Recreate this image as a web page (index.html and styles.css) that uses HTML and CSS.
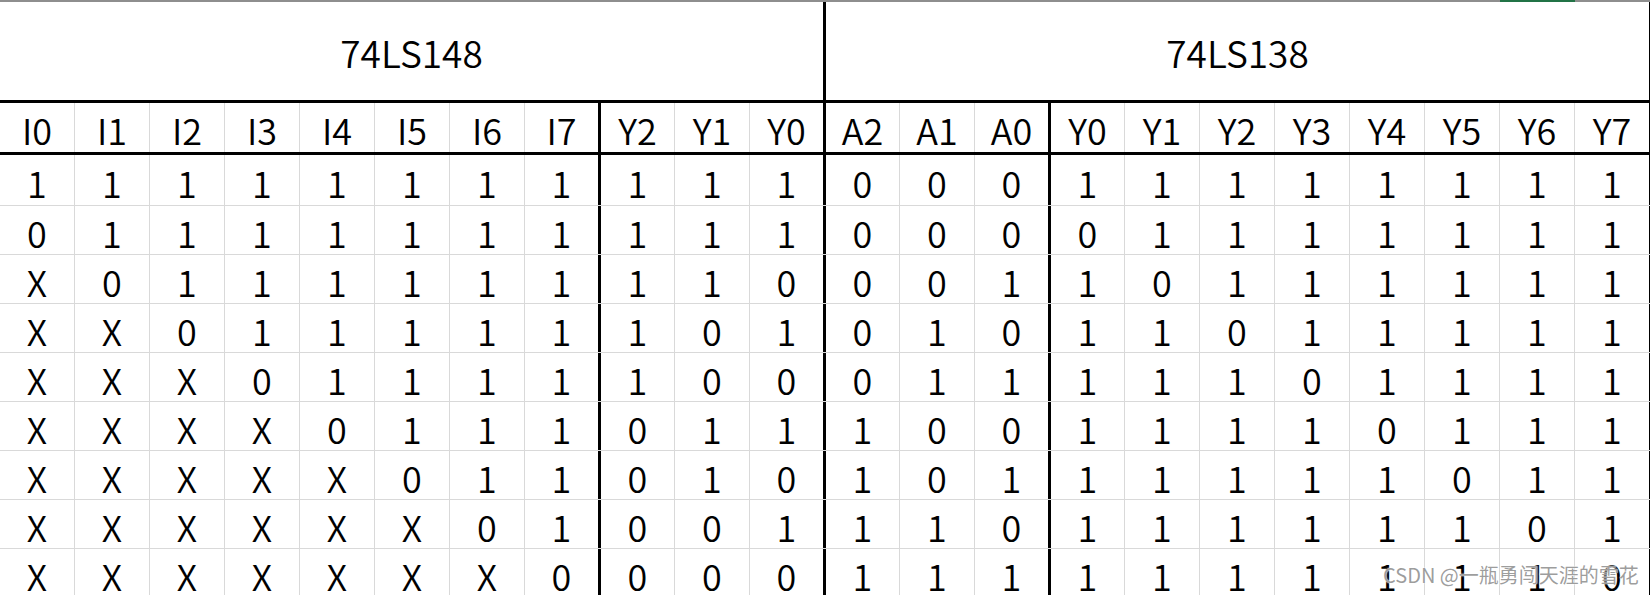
FILE: index.html
```html
<!DOCTYPE html>
<html lang="zh-CN">
<head>
<meta charset="utf-8">
<title>74LS148 / 74LS138</title>
<link rel="stylesheet" href="styles.css">
</head>
<body>
<div class="strip"><div class="strip-sel"></div></div>
<div class="sheet">
  <div class="row title">
    <div class="cell t1">74LS148</div>
    <div class="cell t2">74LS138</div>
  </div>
  <div class="row head">
    <div class="cell">I0</div><div class="cell">I1</div><div class="cell">I2</div><div class="cell">I3</div><div class="cell">I4</div><div class="cell">I5</div><div class="cell">I6</div><div class="cell">I7</div><div class="cell">Y2</div><div class="cell">Y1</div><div class="cell">Y0</div><div class="cell">A2</div><div class="cell">A1</div><div class="cell">A0</div><div class="cell">Y0</div><div class="cell">Y1</div><div class="cell">Y2</div><div class="cell">Y3</div><div class="cell">Y4</div><div class="cell">Y5</div><div class="cell">Y6</div><div class="cell">Y7</div>
  </div>
  <div class="row data first">
    <div class="cell">1</div><div class="cell">1</div><div class="cell">1</div><div class="cell">1</div><div class="cell">1</div><div class="cell">1</div><div class="cell">1</div><div class="cell">1</div><div class="cell">1</div><div class="cell">1</div><div class="cell">1</div><div class="cell">0</div><div class="cell">0</div><div class="cell">0</div><div class="cell">1</div><div class="cell">1</div><div class="cell">1</div><div class="cell">1</div><div class="cell">1</div><div class="cell">1</div><div class="cell">1</div><div class="cell">1</div>
  </div>
  <div class="row data">
    <div class="cell">0</div><div class="cell">1</div><div class="cell">1</div><div class="cell">1</div><div class="cell">1</div><div class="cell">1</div><div class="cell">1</div><div class="cell">1</div><div class="cell">1</div><div class="cell">1</div><div class="cell">1</div><div class="cell">0</div><div class="cell">0</div><div class="cell">0</div><div class="cell">0</div><div class="cell">1</div><div class="cell">1</div><div class="cell">1</div><div class="cell">1</div><div class="cell">1</div><div class="cell">1</div><div class="cell">1</div>
  </div>
  <div class="row data">
    <div class="cell">X</div><div class="cell">0</div><div class="cell">1</div><div class="cell">1</div><div class="cell">1</div><div class="cell">1</div><div class="cell">1</div><div class="cell">1</div><div class="cell">1</div><div class="cell">1</div><div class="cell">0</div><div class="cell">0</div><div class="cell">0</div><div class="cell">1</div><div class="cell">1</div><div class="cell">0</div><div class="cell">1</div><div class="cell">1</div><div class="cell">1</div><div class="cell">1</div><div class="cell">1</div><div class="cell">1</div>
  </div>
  <div class="row data">
    <div class="cell">X</div><div class="cell">X</div><div class="cell">0</div><div class="cell">1</div><div class="cell">1</div><div class="cell">1</div><div class="cell">1</div><div class="cell">1</div><div class="cell">1</div><div class="cell">0</div><div class="cell">1</div><div class="cell">0</div><div class="cell">1</div><div class="cell">0</div><div class="cell">1</div><div class="cell">1</div><div class="cell">0</div><div class="cell">1</div><div class="cell">1</div><div class="cell">1</div><div class="cell">1</div><div class="cell">1</div>
  </div>
  <div class="row data">
    <div class="cell">X</div><div class="cell">X</div><div class="cell">X</div><div class="cell">0</div><div class="cell">1</div><div class="cell">1</div><div class="cell">1</div><div class="cell">1</div><div class="cell">1</div><div class="cell">0</div><div class="cell">0</div><div class="cell">0</div><div class="cell">1</div><div class="cell">1</div><div class="cell">1</div><div class="cell">1</div><div class="cell">1</div><div class="cell">0</div><div class="cell">1</div><div class="cell">1</div><div class="cell">1</div><div class="cell">1</div>
  </div>
  <div class="row data">
    <div class="cell">X</div><div class="cell">X</div><div class="cell">X</div><div class="cell">X</div><div class="cell">0</div><div class="cell">1</div><div class="cell">1</div><div class="cell">1</div><div class="cell">0</div><div class="cell">1</div><div class="cell">1</div><div class="cell">1</div><div class="cell">0</div><div class="cell">0</div><div class="cell">1</div><div class="cell">1</div><div class="cell">1</div><div class="cell">1</div><div class="cell">0</div><div class="cell">1</div><div class="cell">1</div><div class="cell">1</div>
  </div>
  <div class="row data">
    <div class="cell">X</div><div class="cell">X</div><div class="cell">X</div><div class="cell">X</div><div class="cell">X</div><div class="cell">0</div><div class="cell">1</div><div class="cell">1</div><div class="cell">0</div><div class="cell">1</div><div class="cell">0</div><div class="cell">1</div><div class="cell">0</div><div class="cell">1</div><div class="cell">1</div><div class="cell">1</div><div class="cell">1</div><div class="cell">1</div><div class="cell">1</div><div class="cell">0</div><div class="cell">1</div><div class="cell">1</div>
  </div>
  <div class="row data">
    <div class="cell">X</div><div class="cell">X</div><div class="cell">X</div><div class="cell">X</div><div class="cell">X</div><div class="cell">X</div><div class="cell">0</div><div class="cell">1</div><div class="cell">0</div><div class="cell">0</div><div class="cell">1</div><div class="cell">1</div><div class="cell">1</div><div class="cell">0</div><div class="cell">1</div><div class="cell">1</div><div class="cell">1</div><div class="cell">1</div><div class="cell">1</div><div class="cell">1</div><div class="cell">0</div><div class="cell">1</div>
  </div>
  <div class="row data">
    <div class="cell">X</div><div class="cell">X</div><div class="cell">X</div><div class="cell">X</div><div class="cell">X</div><div class="cell">X</div><div class="cell">X</div><div class="cell">0</div><div class="cell">0</div><div class="cell">0</div><div class="cell">0</div><div class="cell">1</div><div class="cell">1</div><div class="cell">1</div><div class="cell">1</div><div class="cell">1</div><div class="cell">1</div><div class="cell">1</div><div class="cell">1</div><div class="cell">1</div><div class="cell">1</div><div class="cell">0</div>
  </div>
</div>
<div class="watermark">CSDN @一瓶勇闯天涯的雪花</div>
</body>
</html>
```

FILE: styles.css
```css
html, body {
  margin: 0;
  padding: 0;
  background: #ffffff;
  width: 1650px;
  height: 595px;
  overflow: hidden;
}

body {
  position: relative;
  font-family: "Noto Sans CJK SC", "Noto Sans", sans-serif;
  font-weight: 350;
  color: #000000;
}

.strip {
  height: 2px;
  width: 1650px;
  background: #8e8e8e;
  display: flex;
  padding-left: 1500px;
  box-sizing: border-box;
}

.strip-sel {
  width: 75px;
  height: 2px;
  background: #217346;
}

.sheet {
  display: flex;
  flex-direction: column;
  width: 1650px;
}

.row {
  display: flex;
  box-sizing: border-box;
}

.cell {
  box-sizing: border-box;
  width: 75px;
  flex: none;
  display: flex;
  align-items: center;
  justify-content: center;
  font-size: 36px;
  line-height: 36px;
  padding-top: 3px;
  border-right: 1px solid #d9d9d9;
}

/* title row */
.title {
  height: 100px;
  border-bottom: 2px solid #000;
}

.title .cell {
  width: 825px;
  font-size: 37px;
  padding-top: 2px;
}

.title .t1 {
  border-right: 2px solid #000;
}

.title .t2 {
  border-left: 1px solid #000;
  border-right: 1px solid #000;
}

/* header row */
.head {
  height: 52px;
  border-top: 1px solid #000;
  border-bottom: 2px solid #000;
}

/* data rows */
.data {
  height: 49px;
  border-bottom: 1px solid #d9d9d9;
}

.data.first {
  height: 52px;
  border-top: 1px solid #000;
}

/* group separators */
.head .cell:nth-child(8),
.data .cell:nth-child(8),
.head .cell:nth-child(11),
.data .cell:nth-child(11),
.head .cell:nth-child(14),
.data .cell:nth-child(14) {
  border-right: 2px solid #000;
}

.head .cell:nth-child(9),
.data .cell:nth-child(9),
.head .cell:nth-child(12),
.data .cell:nth-child(12),
.head .cell:nth-child(15),
.data .cell:nth-child(15) {
  border-left: 1px solid #000;
}

.head .cell:nth-child(22),
.data .cell:nth-child(22) {
  border-right: 1px solid #000;
}

.watermark {
  position: absolute;
  left: 1383px;
  top: 563px;
  font-size: 20px;
  line-height: 24px;
  font-weight: 400;
  color: rgba(140, 140, 140, 0.85);
  text-shadow: 0 0 1px #ffffff, 0 0 2px #ffffff;
  white-space: nowrap;
}
```
